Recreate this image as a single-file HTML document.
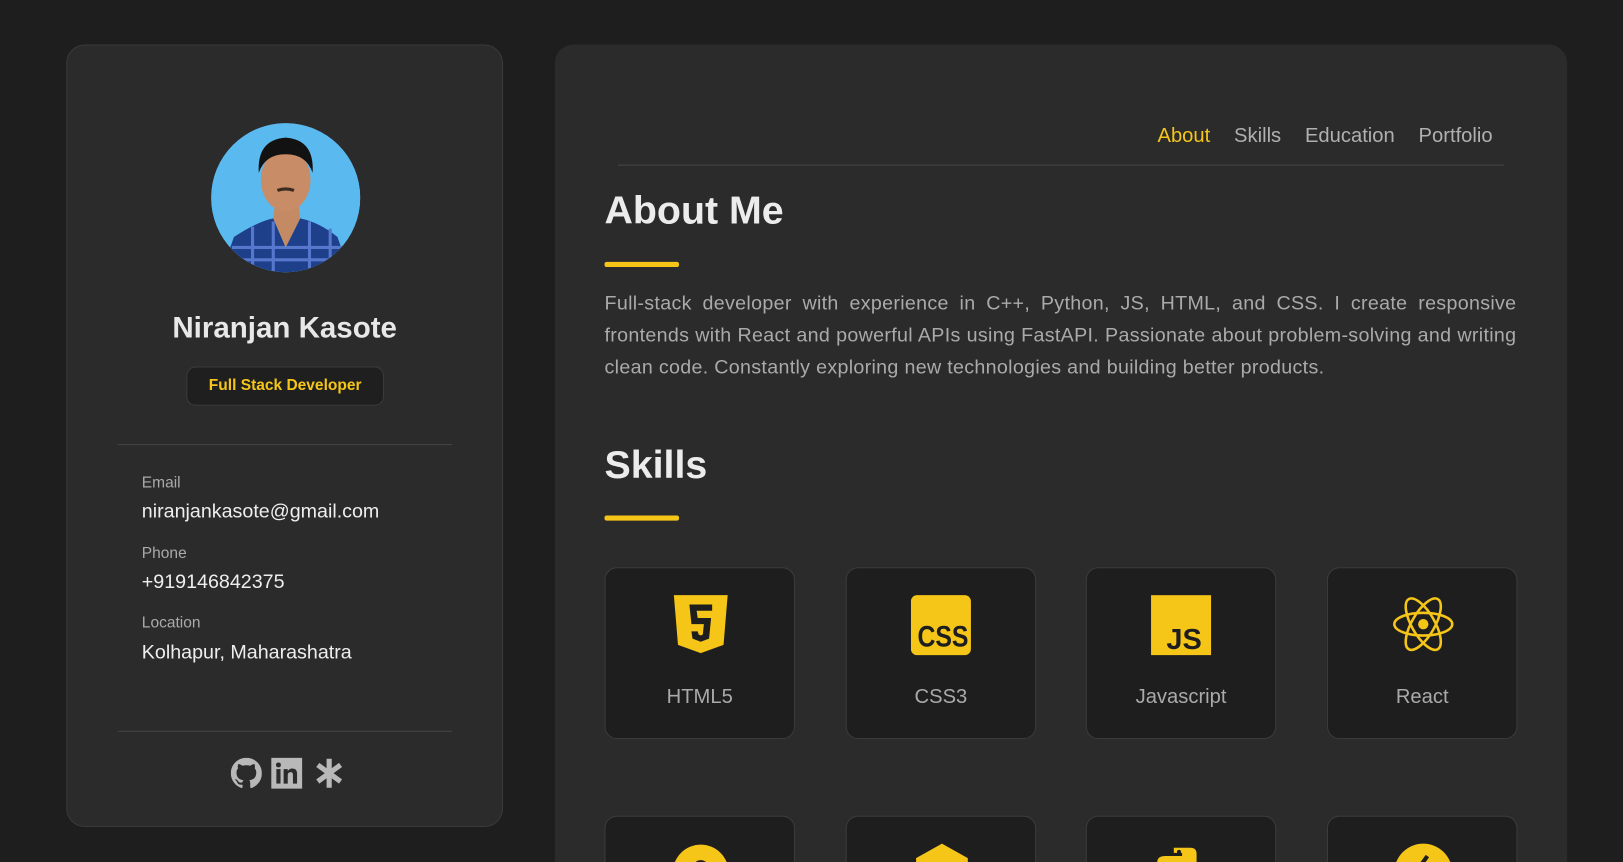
<!DOCTYPE html>
<html style="overflow:hidden;height:862px"><head><meta charset="utf-8"><style>
*{box-sizing:border-box;margin:0;padding:0}
html,body{width:1623px;height:862px;overflow:hidden}
body{background:#1e1e1f;font-family:"Liberation Sans",Arial,sans-serif;position:relative}
.wrap{position:absolute;left:0;top:0;width:1568px;height:833px;overflow:hidden;transform:scale(1.0351);transform-origin:0 0}
.side{position:absolute;left:64px;top:43px;width:422px;height:756px;background:#2b2b2c;border:1px solid #3a3a3b;border-radius:18px}
.avatar{position:absolute;left:139px;top:75px;width:144px;height:144px;border-radius:50%;overflow:hidden;background:#5bb8ef}
.name{position:absolute;top:257px;width:100%;text-align:center;color:#e8e8e8;font-size:28.5px;font-weight:bold}
.badge{position:absolute;left:115px;top:310px;width:191px;height:38px;border-radius:9px;background:#1f1f20;border:1px solid #3a3a3b;color:#f5c518;font-weight:bold;font-size:15px;text-align:center;line-height:36px}
.hr{position:absolute;left:49px;width:323px;height:1px;background:#444}
.lab{position:absolute;left:72px;color:#aaa;font-size:15px}
.val{position:absolute;left:72px;color:#eee;font-size:19px}
.main{position:absolute;left:536px;top:43px;width:978px;height:900px;background:#2b2b2c;border-radius:18px}
.nav{position:absolute;top:77px;right:72px;font-size:19.5px;color:#b0b0b0}
.nav span{margin-left:23px}
.h{position:absolute;left:48px;color:#ececec;font-size:38px;font-weight:bold}
.bar{position:absolute;left:48px;width:72px;height:5px;background:#f5c518;border-radius:2px}
.p{position:absolute;left:48px;top:235px;width:881px;color:#aaa;font-size:19px;line-height:31px;text-align:justify;letter-spacing:0.3px}
.card{position:absolute;width:184px;height:166px;background:#1e1e1f;border:1.5px solid #3b3b3c;border-radius:12px}
.card .ic{position:absolute;left:62px;top:24px;width:60px;height:60px}
.card .t{position:absolute;top:113px;width:100%;text-align:center;color:#aaa;font-size:19.5px}
</style></head><body><div class="wrap">
<div class="side">
 <div class="avatar"><svg width="144" height="144" viewBox="0 0 144 144"><rect width="144" height="144" fill="#5ab9ee"/><path d="M10 144 L22 110 Q45 95 60 92 L72 120 L86 92 Q105 96 122 110 L134 144Z" fill="#1e3f8a"/><path d="M20 120 L130 120 M30 132 L125 132 M40 100 L40 144 M60 95 L60 144 M95 95 L95 144 M115 102 L115 144" stroke="#5577cc" stroke-width="3"/><path d="M60 92 L72 120 L86 92 L84 75 L62 75Z" fill="#c48a64"/><ellipse cx="72" cy="55" rx="24" ry="30" fill="#c88c66"/><path d="M46 48 Q44 16 72 14 Q100 16 98 48 Q92 30 72 30 Q52 30 46 48Z" fill="#121212"/><path d="M64 65 Q72 62 80 65" stroke="#3a2a20" stroke-width="3" fill="none"/></svg></div>
 <div class="name">Niranjan Kasote</div>
 <div class="badge">Full Stack Developer</div>
 <div class="hr" style="top:385px"></div>
 <div class="lab" style="top:414px">Email</div>
 <div class="val" style="top:440px">niranjankasote@gmail.com</div>
 <div class="lab" style="top:482px">Phone</div>
 <div class="val" style="top:508px">+919146842375</div>
 <div class="lab" style="top:549px">Location</div>
 <div class="val" style="top:576px">Kolhapur, Maharashatra</div>
 <div class="hr" style="top:662px"></div>
 <svg style="position:absolute;left:158px;top:688px" width="30" height="30" viewBox="0 0 16 16"><path fill="#b8b8b8" d="M8 0C3.58 0 0 3.58 0 8c0 3.54 2.29 6.53 5.47 7.59.4.07.55-.17.55-.38v-1.33c-2.23.48-2.7-1.07-2.7-1.07-.36-.92-.89-1.17-.89-1.17-.73-.5.05-.49.05-.49.8.06 1.23.83 1.23.83.71 1.22 1.870.87 2.33.66.07-.52.28-.87.51-1.07-1.78-.2-3.64-.89-3.64-3.95 0-.87.31-1.59.82-2.15-.08-.2-.36-1.02.08-2.12 0 0 .67-.21 2.2.82a7.6 7.6 0 014 0c1.53-1.04 2.2-.82 2.2-.82.44 1.1.16 1.92.08 2.12.51.56.82 1.27.82 2.15 0 3.07-1.87 3.75-3.65 3.95.29.25.54.73.54 1.48v2.2c0 .21.15.46.55.38A8 8 0 0016 8c0-4.42-3.58-8-8-8z"/></svg>
 <svg style="position:absolute;left:197px;top:688px" width="30" height="30" viewBox="0 0 30 30"><rect width="30" height="30" fill="#b8b8b8"/><rect x="5" y="11" width="4" height="14" fill="#2b2b2c"/><circle cx="7" cy="7" r="2.4" fill="#2b2b2c"/><path d="M12 11h4v2q1.5-2.5 4.5-2.5 4.5 0 4.5 5V25h-4v-8.5q0-2.5-2.2-2.5-2.8 0-2.8 3V25h-4z" fill="#2b2b2c"/></svg>
 <svg style="position:absolute;left:239px;top:687px" width="28" height="32" viewBox="0 0 28 32"><g stroke="#b8b8b8" stroke-width="5"><path d="M14 2V30M3 8L25 24M3 24L25 8"/></g></svg>
</div>
<div class="main">
 <div class="nav"><span style="color:#f5c518">About</span><span>Skills</span><span>Education</span><span>Portfolio</span></div>
 <div style="position:absolute;left:61px;top:116px;width:856px;height:1px;background:#484848"></div>
 <div class="h" style="top:140px">About Me</div>
 <div class="bar" style="top:210px"></div>
 <div class="p">Full-stack developer with experience in C++, Python, JS, HTML, and CSS. I create responsive frontends with React and powerful APIs using FastAPI. Passionate about problem-solving and writing clean code. Constantly exploring new technologies and building better products.</div>
 <div class="h" style="top:386px">Skills</div>
 <div class="bar" style="top:455px"></div>

 <div class="card" style="left:48px;top:505px"><svg class="ic" viewBox="0 0 60 60"><path d="M4 2H56L52 50L30 58L8 50Z" fill="#f5c518"/><path d="M19 11H41V17H26L27 24H40L38 44L30 47L22 44L21 37H27L28 40L30 41L32 40L33 30H21Z" fill="#1e1e1f"/></svg><div class="t">HTML5</div></div>
 <div class="card" style="left:281px;top:505px"><svg class="ic" viewBox="0 0 60 60"><rect x="0" y="2" width="58" height="58" rx="6" fill="#f5c518"/><text x="31" y="52" text-anchor="middle" font-family="Liberation Sans" font-weight="bold" font-size="24" fill="#1e1e1f" transform="scale(1,1.2) translate(0,-9)">CSS</text></svg><div class="t">CSS3</div></div>
 <div class="card" style="left:513px;top:505px"><svg class="ic" viewBox="0 0 60 60"><rect x="0" y="2" width="58" height="58" fill="#f5c518"/><text x="32" y="54" text-anchor="middle" font-family="Liberation Sans" font-weight="bold" font-size="28" fill="#1e1e1f">JS</text></svg><div class="t">Javascript</div></div>
 <div class="card" style="left:746px;top:505px"><svg class="ic" viewBox="0 0 60 60"><g fill="none" stroke="#f5c518" stroke-width="2.5"><ellipse cx="30" cy="30" rx="28" ry="11"/><ellipse cx="30" cy="30" rx="28" ry="11" transform="rotate(60 30 30)"/><ellipse cx="30" cy="30" rx="28" ry="11" transform="rotate(120 30 30)"/></g><circle cx="30" cy="30" r="5" fill="#f5c518"/></svg><div class="t">React</div></div>

 <div class="card" style="left:48px;top:745px"><svg class="ic" viewBox="0 0 60 60"><circle cx="30" cy="30" r="27" fill="#f5c518"/><circle cx="30" cy="26" r="8" fill="#1e1e1f"/></svg></div>
 <div class="card" style="left:281px;top:745px"><svg class="ic" viewBox="0 0 60 60"><path d="M30 2L55 16V44L30 58L5 44V16Z" fill="#f5c518"/><circle cx="30" cy="30" r="9" fill="#1e1e1f"/></svg></div>
 <div class="card" style="left:513px;top:745px"><svg class="ic" viewBox="0 0 60 60"><path d="M22 6H38Q44 6 44 12V26H18Q10 26 10 34V40H6V20Q6 14 14 14H30V11H22Z" fill="#f5c518"/><circle cx="27" cy="10" r="2" fill="#1e1e1f"/></svg></div>
 <div class="card" style="left:746px;top:745px"><svg class="ic" viewBox="0 0 60 60"><circle cx="30" cy="30" r="28" fill="#f5c518"/><path d="M34 14L24 28H36" stroke="#1e1e1f" stroke-width="4" fill="none"/></svg></div>
</div>
</div></body></html>
